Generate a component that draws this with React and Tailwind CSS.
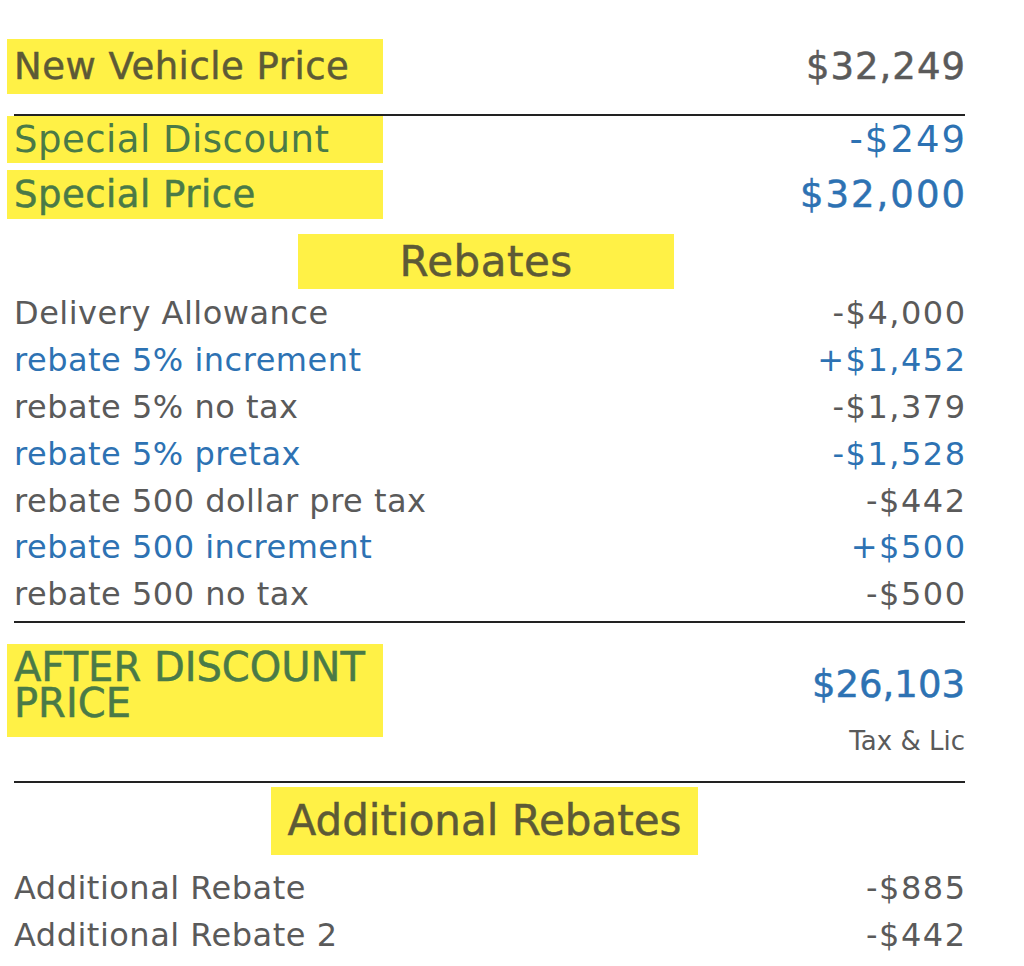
const rebates = [
  { label: 'Delivery Allowance', value: '-$4,000', blue: false },
  { label: 'rebate 5% increment', value: '+$1,452', blue: true },
  { label: 'rebate 5% no tax', value: '-$1,379', blue: false },
  { label: 'rebate 5% pretax', value: '-$1,528', blue: true },
  { label: 'rebate 500 dollar pre tax', value: '-$442', blue: false },
  { label: 'rebate 500 increment', value: '+$500', blue: true },
  { label: 'rebate 500 no tax', value: '-$500', blue: false },
];

const additional = [
  { label: 'Additional Rebate', value: '-$885' },
  { label: 'Additional Rebate 2', value: '-$442' },
];

function Rule() {
  return <div className="ml-[7px] h-[2px] bg-[#222]" />;
}

function Row({ label, value, blue }) {
  const color = blue ? 'text-[#2d72b3]' : 'text-[#5a5a5a]';
  return (
    <div className={`flex h-[46.8px] items-center justify-between pl-[7px] text-[32px] leading-none ${color}`}>
      <span className="tracking-[0.5px]">{label}</span>
      <span className="-mr-[1.5px] tracking-[1.5px]">{value}</span>
    </div>
  );
}

export default function App() {
  return (
    <div
      className="min-h-[966px] bg-white pt-[39px]"
      style={{ fontFamily: '"DejaVu Sans", "Liberation Sans", sans-serif' }}
    >
      <div className="ml-[7px] w-[958px]">
        {/* New vehicle price */}
        <div className="flex items-center justify-between leading-none">
          <div className="flex h-[55px] w-[376px] items-center bg-[#fff146] pl-[7px] text-[37px] tracking-[0.5px] text-[#5d5a36] [-webkit-text-stroke:0.5px]">
            New Vehicle Price
          </div>
          <span className="-mr-[1px] text-[37px] tracking-[1px] text-[#5a5a5a] [-webkit-text-stroke:0.5px]">$32,249</span>
        </div>

        <div className="mt-[20px]">
          <Rule />
        </div>

        {/* Special discount / price */}
        <div className="flex items-center justify-between leading-none">
          <div className="flex h-[47px] w-[376px] items-center bg-[#fff146] pl-[7px] text-[37px] tracking-[0.5px] text-[#4a7a47]">
            Special Discount
          </div>
          <span className="-mr-[2px] text-[37px] tracking-[2px] text-[#2d72b3]">-$249</span>
        </div>
        <div className="mt-[7px] flex items-center justify-between leading-none">
          <div className="flex h-[49px] w-[376px] items-center bg-[#fff146] pl-[7px] text-[37px] tracking-[0.5px] text-[#4a7a47] [-webkit-text-stroke:0.5px]">
            Special Price
          </div>
          <span className="-mr-[2px] text-[37px] tracking-[2px] text-[#2d72b3] [-webkit-text-stroke:0.5px]">$32,000</span>
        </div>

        {/* Rebates */}
        <div className="mt-[15px] flex justify-center leading-none">
          <div className="flex h-[55px] w-[376px] items-center justify-center bg-[#fff146] text-[42px] tracking-[0.5px] text-[#5d5a36] [-webkit-text-stroke:0.5px]">
            Rebates
          </div>
        </div>
        <div className="mt-[1px]">
          {rebates.map((r) => (
            <Row key={r.label} {...r} />
          ))}
        </div>

        <div className="mt-[3px]">
          <Rule />
        </div>

        {/* After discount price */}
        <div className="mt-[21px] flex items-start justify-between">
          <div className="h-[93px] w-[376px] bg-[#fff146] pl-[7px] pt-[5px] text-[40px] uppercase leading-[36px] text-[#4a7a47] [-webkit-text-stroke:0.5px]">
            After Discount<br />Price
          </div>
          <div className="flex flex-col items-end pt-[19px]">
            <span className="text-[37px] leading-[44px] text-[#2d72b3] [-webkit-text-stroke:0.5px]">$26,103</span>
            <span className="mt-[20px] text-[26px] leading-[28px] text-[#5a5a5a]">Tax &amp; Lic</span>
          </div>
        </div>

        <div className="mt-[26px]">
          <Rule />
        </div>

        {/* Additional rebates */}
        <div className="mt-[4px] flex justify-center leading-none">
          <div className="flex h-[68px] w-[427px] items-center justify-center bg-[#fff146] text-[42px] text-[#5d5a36] [-webkit-text-stroke:0.5px]">
            Additional Rebates
          </div>
          <div className="w-[3px]" />
        </div>
        <div className="mt-[10px]">
          {additional.map((r) => (
            <Row key={r.label} {...r} />
          ))}
        </div>
      </div>
    </div>
  );
}
